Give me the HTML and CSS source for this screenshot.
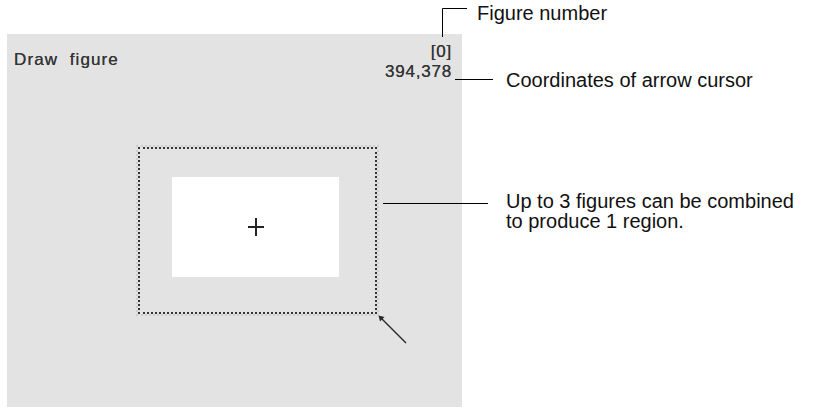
FILE: index.html
```html
<!DOCTYPE html>
<html>
<head>
<meta charset="utf-8">
<link rel="stylesheet" href="styles.css">
</head>
<body>
<div class="canvas">
  <div class="panel">
    <div class="panel-head">
      <span class="title">Draw &nbsp;figure</span>
      <div class="readout">
        <span class="fig-no">[0]</span>
        <span class="coords">394,378</span>
      </div>
    </div>
    <div class="region">
      <div class="figure"><span class="cross"></span></div>
    </div>
    <svg class="cursor" width="40" height="40" viewBox="0 0 40 40">
      <line x1="2" y1="2" x2="28" y2="28" stroke="#2a2a2a" stroke-width="1.5"/>
      <polygon points="0.5,0.5 6.5,2 2,6.5" fill="#2a2a2a"/>
    </svg>
  </div>

  <svg class="leaders" width="820" height="408" viewBox="0 0 820 408">
    <polyline points="442.5,37 442.5,8.5 467,8.5" fill="none" stroke="#000" stroke-width="1"/>
    <line x1="455" y1="79.5" x2="493" y2="79.5" stroke="#000" stroke-width="1"/>
    <line x1="383" y1="203.5" x2="488" y2="203.5" stroke="#000" stroke-width="1"/>
  </svg>

  <div class="note note-fig">Figure number</div>
  <div class="note note-coord">Coordinates of arrow cursor</div>
  <div class="note note-region">Up to 3 figures can be combined<br>to produce 1 region.</div>
</div>
</body>
</html>
```
FILE: styles.css
```css
html, body {
  margin: 0;
  padding: 0;
  background: #ffffff;
}

.canvas {
  position: relative;
  width: 820px;
  height: 408px;
  overflow: hidden;
  font-family: "Liberation Sans", Arial, sans-serif;
}

.panel {
  position: relative;
  margin: 34px 0 0 7px;
  width: 455px;
  height: 373px;
  background: #e3e3e3;
  box-sizing: border-box;
  padding: 8px 10px 0 7px;
}

.panel-head {
  display: flex;
  justify-content: space-between;
  align-items: flex-start;
}

.title {
  margin-top: 9px;
  font-size: 17px;
  line-height: 18px;
  letter-spacing: 1.1px;
  color: #353535;
  text-shadow: 0 0 0.5px #353535;
}

.readout {
  display: flex;
  flex-direction: column;
  align-items: flex-end;
  font-size: 17px;
  line-height: 20px;
  letter-spacing: 0.8px;
  color: #353535;
  text-shadow: 0 0 0.5px #353535;
}

.region {
  position: absolute;
  left: 131px;
  top: 113px;
  width: 239px;
  height: 167px;
  box-sizing: border-box;
  border: 2px dotted #333333;
  outline: 2px dotted #cdcdcd;
  outline-offset: 0px;
  display: flex;
  padding: 28px 0 0 32px;
}

.figure {
  width: 167px;
  height: 100px;
  background: #ffffff;
  display: flex;
  align-items: center;
  justify-content: center;
}

.cross {
  position: relative;
  width: 16px;
  height: 18px;
  display: block;
}
.cross::before,
.cross::after {
  content: "";
  position: absolute;
  background: #222;
}
.cross::before {
  left: 0;
  right: 0;
  top: 8px;
  height: 2px;
}
.cross::after {
  top: 0;
  bottom: 0;
  left: 7px;
  width: 2px;
}

.cursor {
  position: absolute;
  left: 371px;
  top: 281px;
}

.leaders {
  position: absolute;
  left: 0;
  top: 0;
}

.note {
  position: absolute;
  font-size: 20px;
  line-height: 20px;
  color: #111;
  white-space: nowrap;
}
.note-fig {
  left: 477px;
  top: 3px;
}
.note-coord {
  left: 506px;
  top: 70px;
}
.note-region {
  left: 506px;
  top: 191px;
}
```
